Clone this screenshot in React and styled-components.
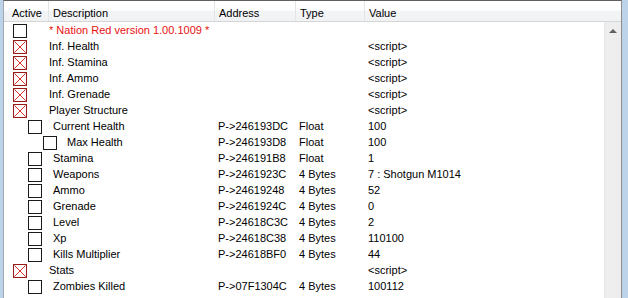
import React from "react";
import styled, { createGlobalStyle } from "styled-components";

const Global = createGlobalStyle`
  html, body { margin: 0; padding: 0; background: #ffffff; }
  body { font-family: "Liberation Sans", Arial, sans-serif; font-size: 11px; color: #000; }
`;

const COLS = "44px 166px 81px 69px 1fr";

const Page = styled.div`
  display: flex;
  width: 628px;
  height: 298px;
  overflow: hidden;
`;

const Strip = styled.div`
  width: ${(p) => p.$w}px;
  flex: none;
  background: #bcd3ea;
`;

const Frame = styled.div`
  flex: 1;
  min-width: 0;
  display: flex;
  flex-direction: column;
  border-top: 1px solid #5f5f5f;
  border-left: 1px solid #a0a8b2;
  border-right: 1px solid #8c8c8c;
  background: #fff;
`;

const Header = styled.div`
  display: grid;
  grid-template-columns: ${COLS};
  height: 21px;
  box-sizing: border-box;
  border-bottom: 1px solid #d5d5d5;
  background: linear-gradient(#ffffff 0%, #ffffff 45%, #f3f4f6 50%, #f1f2f4 100%);
  flex: none;
`;

const HeadCell = styled.div`
  padding: 6px 0 0 ${(p) => p.$pad ?? 4}px;
  line-height: 13px;
  white-space: nowrap;
  overflow: hidden;
  border-left: ${(p) => (p.$first ? "none" : "1px solid #e3e4e6")};
`;

const Body = styled.div`
  flex: 1;
  display: flex;
  min-height: 0;
`;

const List = styled.div`
  flex: 1;
  min-width: 0;
  overflow: hidden;
`;

const Row = styled.div`
  display: grid;
  grid-template-columns: 210px 81px 69px 1fr;
  height: 16px;
  line-height: 16px;
  white-space: nowrap;
`;

const TreeCell = styled.div`
  display: flex;
  align-items: flex-start;
`;

const Box = styled.div`
  flex: none;
  width: 14px;
  height: 14px;
  box-sizing: border-box;
  margin: 2px 0 0 ${(p) => 9 + 15 * p.$level}px;
  border: 1px solid ${(p) => (p.$checked ? "#9a1a1a" : "#1a1a1a")};
  background: #fff;
  position: relative;
  svg { position: absolute; inset: 0; display: block; }
`;

const Label = styled.span`
  margin-left: ${(p) => [22, 11, 10][p.$level]}px;
  color: ${(p) => (p.$red ? "#e81010" : "#000")};
`;

const Cell = styled.div`
  padding-left: 4px;
  overflow: hidden;
`;

const ScrollTrack = styled.div`
  width: 17px;
  flex: none;
  background: linear-gradient(90deg, #e6e6e6 0px, #eeeeee 2px, #ededed 100%);
  display: flex;
  flex-direction: column;
  align-items: center;
`;

const UpArrow = styled.div`
  margin-top: 7px;
  width: 0;
  height: 0;
  border-left: 4px solid transparent;
  border-right: 4px solid transparent;
  border-bottom: 4px solid #606060;
`;

const Check = ({ checked, level }) => (
  <Box $checked={checked} $level={level}>
    {checked && (
      <svg width="12" height="12" viewBox="0 0 12 12">
        <path d="M0.5 0.5 L11.5 11.5 M11.5 0.5 L0.5 11.5" stroke="#e0302a" strokeWidth="1" fill="none" />
      </svg>
    )}
  </Box>
);

const rows = [
  { d: "* Nation Red version 1.00.1009 *", red: true, l: 0, c: false },
  { d: "Inf. Health", l: 0, c: true, v: "<script>" },
  { d: "Inf. Stamina", l: 0, c: true, v: "<script>" },
  { d: "Inf. Ammo", l: 0, c: true, v: "<script>" },
  { d: "Inf. Grenade", l: 0, c: true, v: "<script>" },
  { d: "Player Structure", l: 0, c: true, v: "<script>" },
  { d: "Current Health", l: 1, a: "P->246193DC", t: "Float", v: "100" },
  { d: "Max Health", l: 2, a: "P->246193D8", t: "Float", v: "100" },
  { d: "Stamina", l: 1, a: "P->246191B8", t: "Float", v: "1" },
  { d: "Weapons", l: 1, a: "P->2461923C", t: "4 Bytes", v: "7 : Shotgun M1014" },
  { d: "Ammo", l: 1, a: "P->24619248", t: "4 Bytes", v: "52" },
  { d: "Grenade", l: 1, a: "P->2461924C", t: "4 Bytes", v: "0" },
  { d: "Level", l: 1, a: "P->24618C3C", t: "4 Bytes", v: "2" },
  { d: "Xp", l: 1, a: "P->24618C38", t: "4 Bytes", v: "110100" },
  { d: "Kills Multiplier", l: 1, a: "P->24618BF0", t: "4 Bytes", v: "44" },
  { d: "Stats", l: 0, c: true, v: "<script>" },
  { d: "Zombies Killed", l: 1, a: "P->07F1304C", t: "4 Bytes", v: "100112" },
];

export default function App() {
  return (
    <>
      <Global />
      <Page>
        <Strip $w={3} />
        <Frame>
          <Header>
            <HeadCell $first $pad={8}>Active</HeadCell>
            <HeadCell>Description</HeadCell>
            <HeadCell>Address</HeadCell>
            <HeadCell>Type</HeadCell>
            <HeadCell>Value</HeadCell>
          </Header>
          <Body>
            <List>
              {rows.map((r, i) => (
                <Row key={i}>
                  <TreeCell>
                    <Check checked={!!r.c} level={r.l} />
                    <Label $level={r.l} $red={r.red}>{r.d}</Label>
                  </TreeCell>
                  <Cell>{r.a || ""}</Cell>
                  <Cell>{r.t || ""}</Cell>
                  <Cell>{r.v || ""}</Cell>
                </Row>
              ))}
            </List>
            <ScrollTrack>
              <UpArrow />
            </ScrollTrack>
          </Body>
        </Frame>
        <Strip $w={6} />
      </Page>
    </>
  );
}
